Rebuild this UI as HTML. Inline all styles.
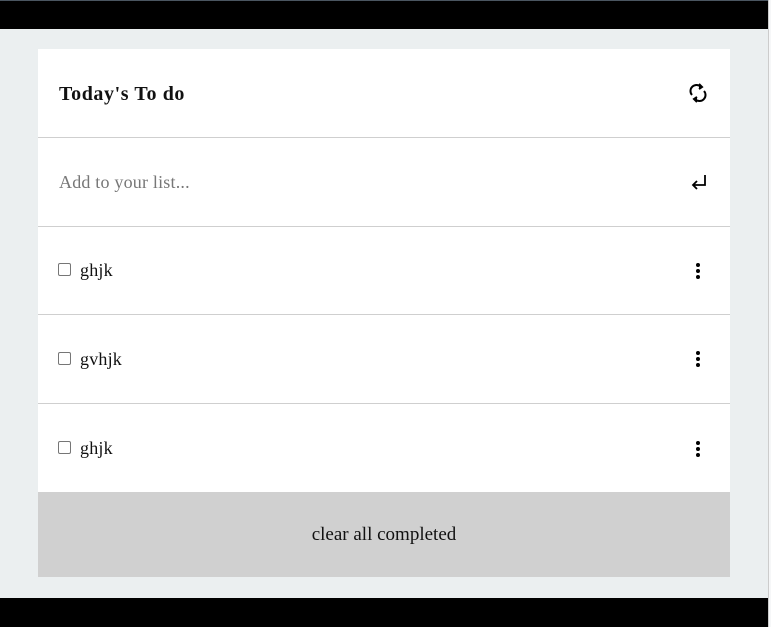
<!DOCTYPE html>
<html><head><style>
*{margin:0;padding:0;box-sizing:border-box}
body{width:771px;height:627px;background:#ebeff0;position:relative;overflow:hidden;font-family:"Liberation Serif",serif;}
.top{position:absolute;left:0;top:0;width:768px;height:29px;background:#000;border-top:1px solid #4a5560}
.bot{position:absolute;left:0;top:598px;width:768px;height:29px;background:#000}
.rs{position:absolute;left:768px;top:0;width:3px;height:627px;background:#f6f7f8;border-left:1px solid #ccc}
.card{position:absolute;left:38px;top:49px;width:692px;height:528px;background:#fff}
.row{height:89px;border-bottom:1px solid #cfcfcf;position:relative;display:flex;align-items:center;padding-left:21px;font-size:18px;color:#111;letter-spacing:0.2px}
.h{font-weight:bold;font-size:20px;letter-spacing:0.6px;padding-top:3px}
.ph{color:#777;font-size:18px}
.cb{width:13px;height:13px;border:1px solid #767676;border-radius:2px;margin-right:9px;margin-left:-1px;margin-top:-2px}
.ic{position:absolute;right:23px;top:50%;transform:translateY(-50%)}
.dots{position:absolute;right:30px;top:50%;transform:translateY(-50%);width:4px}
.dots i{display:block;width:4px;height:4px;border-radius:50%;background:#000;margin:2px 0}
.foot{position:absolute;left:0;top:443px;width:692px;height:85px;background:#d0d0d0;text-align:center;line-height:86px;font-size:19px;color:#111}
</style></head><body>
<div class="top"></div><div class="bot"></div><div class="rs"></div>
<div class="card">
<div class="row h">Today's To do
<svg class="ic" width="18" height="20" viewBox="0 0 18 20" fill="none" stroke="#000" stroke-width="2"><path d="M3 12a6 6 0 0 1 9-8"/><path d="M15 8a6 6 0 0 1-9 8"/><path d="M10 1l3 3-3 2" fill="#000"/><path d="M8 19l-3-3 3-2" fill="#000"/></svg></div>
<div class="row" style="height:89px"><span class="ph">Add to your list...</span>
<svg class="ic" width="16" height="16" viewBox="0 0 16 16" fill="none" stroke="#000" stroke-width="1.8"><path d="M14 1v10H2"/><path d="M6 7l-4 4 4 4"/></svg></div>
<div class="row" style="height:88px"><span class="cb"></span>ghjk<div class="dots"><i></i><i></i><i></i></div></div>
<div class="row"><span class="cb"></span>gvhjk<div class="dots"><i></i><i></i><i></i></div></div>
<div class="row" style="border-bottom:none"><span class="cb"></span>ghjk<div class="dots"><i></i><i></i><i></i></div></div>
<div class="foot">clear all completed</div>
</div>
</body></html>
